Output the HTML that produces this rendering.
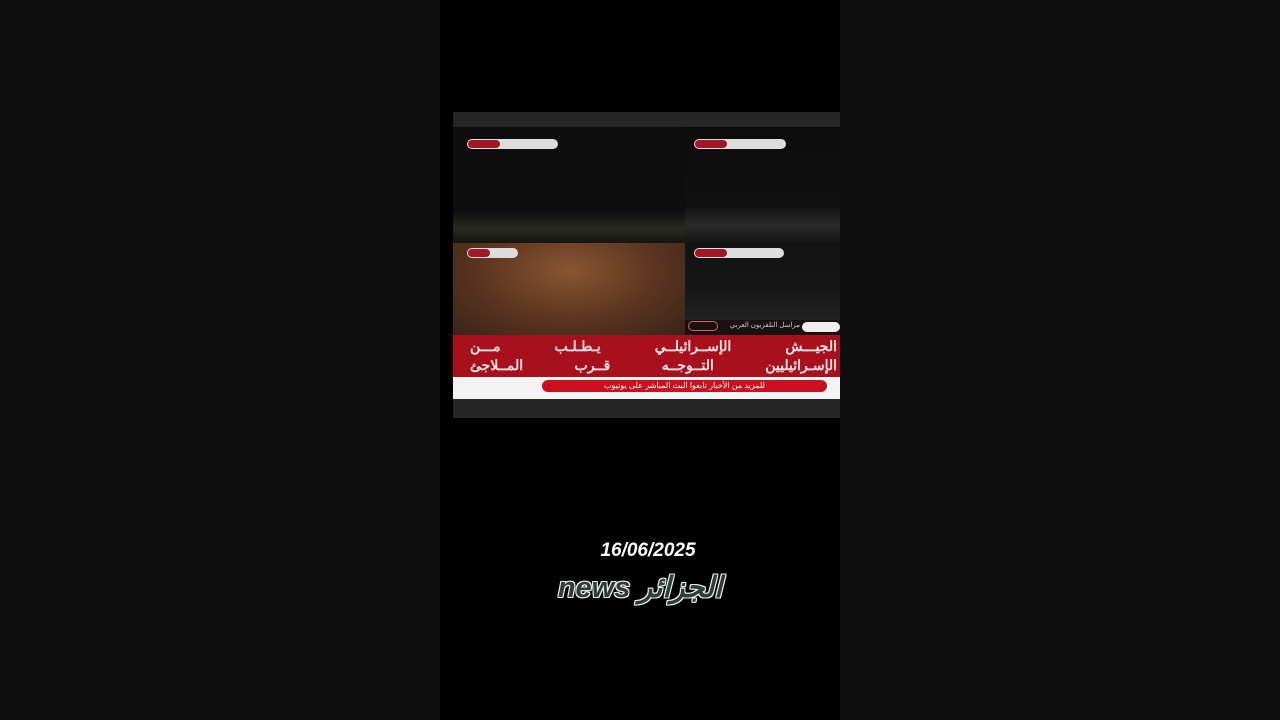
<!DOCTYPE html>
<html><head><meta charset="utf-8"><style>
body{margin:0;width:1280px;height:720px;background:#0e0e0e;position:relative;overflow:hidden;font-family:"Liberation Sans","Noto Sans CJK SC",sans-serif}
.a{position:absolute}
.l{position:absolute;height:12px;font-size:14px;font-weight:bold;color:#f4e4e4;direction:rtl;text-align:justify;text-align-last:justify;line-height:14px}
</style></head><body>
<div class="a" style="left:440px;top:0;width:400px;height:720px;background:#000"></div>
<div class="a" style="left:453px;top:112px;width:387px;height:306px;background:#262626"></div>
<div class="a" style="left:453px;top:127px;width:232px;height:116px;background:linear-gradient(#0d0d0d 0%,#0d0d0d 72%,#2a2a22 88%,#151510 100%)"></div>
<div class="a" style="left:685px;top:127px;width:155px;height:116px;background:linear-gradient(#0c0c0c 0%,#101010 68%,#2a2a2a 85%,#141414 100%)"></div>
<div class="a" style="left:453px;top:243px;width:232px;height:92px;background:radial-gradient(ellipse at 50% 30%,#8a5530,#5a3420 55%,#3a2418)"></div>
<div class="a" style="left:685px;top:243px;width:155px;height:77px;background:linear-gradient(#121212,#161616 60%,#222 100%)"></div>
<div class="a" style="left:467px;top:139px;width:91px;height:10px;border-radius:5px;background:#ddd"><div class="a" style="left:1px;top:1px;width:32px;height:8px;border-radius:4px;background:#a01828"></div></div>
<div class="a" style="left:694px;top:139px;width:92px;height:10px;border-radius:5px;background:#ddd"><div class="a" style="left:1px;top:1px;width:32px;height:8px;border-radius:4px;background:#a01828"></div></div>
<div class="a" style="left:467px;top:248px;width:51px;height:10px;border-radius:5px;background:#ddd"><div class="a" style="left:1px;top:1px;width:22px;height:8px;border-radius:4px;background:#a01828"></div></div>
<div class="a" style="left:694px;top:248px;width:90px;height:10px;border-radius:5px;background:#ddd"><div class="a" style="left:1px;top:1px;width:32px;height:8px;border-radius:4px;background:#a01828"></div></div>
<div class="a" style="left:685px;top:320px;width:155px;height:15px;background:#1a1010"></div>
<div class="a" style="left:688px;top:321px;width:30px;height:10px;border-radius:5px;border:1px solid #c66;box-sizing:border-box"></div>
<div class="a" style="left:722px;top:321px;width:78px;height:10px;font-size:7px;color:#ccc;direction:rtl">مراسل التلفزيون العربي</div>
<div class="a" style="left:802px;top:322px;width:38px;height:10px;border-radius:5px;background:#eee"></div>
<div class="a" style="left:453px;top:335px;width:387px;height:42px;background:#a8101e"></div>
<div class="l" style="left:470px;top:339px;width:367px;letter-spacing:1px">الجيـــش الإســرائيلــي يـطـلـب مـــن</div>
<div class="l" style="left:470px;top:358px;width:367px;letter-spacing:1px">الإسـرائيليين التــوجــه قــرب المــلاجئ</div>
<div class="a" style="left:453px;top:377px;width:387px;height:22px;background:#f4f4f4"></div>
<div class="a" style="left:542px;top:380px;width:285px;height:12px;border-radius:6px;background:#c8101e;color:#fff;font-size:8px;line-height:12px;text-align:center;direction:rtl">للمزيد من الأخبار تابعوا البث المباشر على يوتيوب</div>
<div class="a" style="left:440px;top:540px;width:400px;text-align:center;color:#fff;font-weight:bold;font-style:italic;font-size:19px;padding-left:8px">16/06/2025</div>
<div class="a" style="left:440px;top:570px;width:400px;text-align:center;color:#2c3e36;font-weight:bold;font-style:italic;font-size:29px;line-height:36px;text-shadow:1px 1px 0 #eee,-1px -1px 0 #eee,1px -1px 0 #eee,-1px 1px 0 #eee,0 1px 0 #eee,0 -1px 0 #eee,1px 0 0 #eee,-1px 0 0 #eee">news الجزائر</div>
</body></html>
